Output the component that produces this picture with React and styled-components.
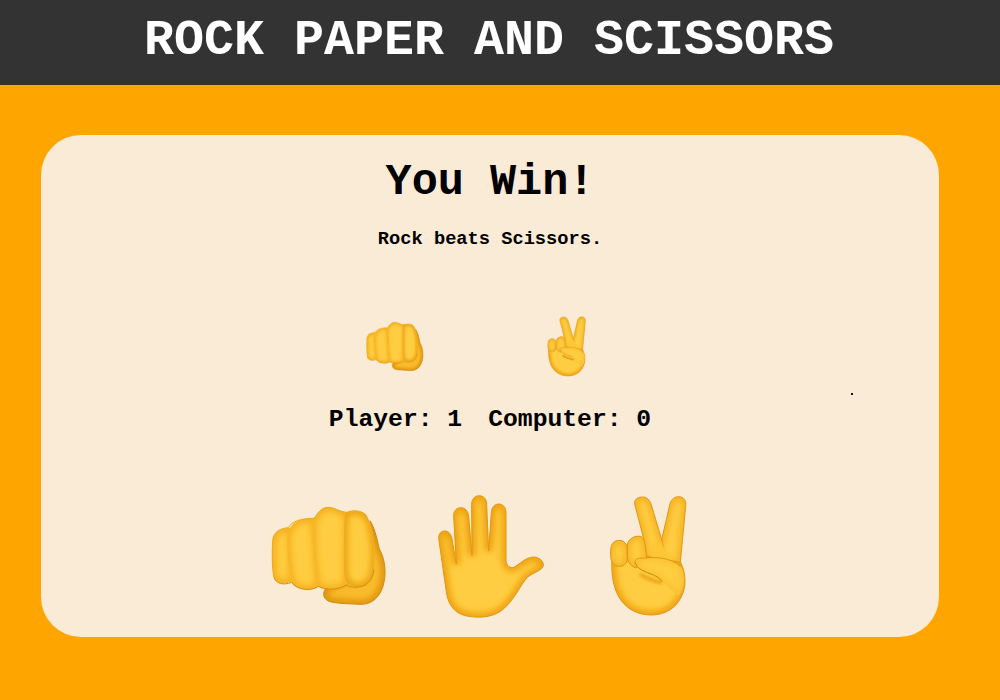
import React from "react";
import styled, { createGlobalStyle } from "styled-components";

const GlobalStyle = createGlobalStyle`
  html, body {
    margin: 0;
    padding: 0;
    background: #ffa500;
    font-family: "Liberation Mono", "Courier New", monospace;
  }
`;

const Header = styled.header`
  height: 85px;
  box-sizing: border-box;
  background: #333333;
  padding: 0 22px 4px 0;
  display: flex;
  align-items: center;
  justify-content: center;
`;

const Title = styled.h1`
  margin: 0;
  color: #ffffff;
  font-size: 50px;
  line-height: 1;
  font-weight: 700;
  white-space: nowrap;
`;

const Main = styled.main`
  padding: 50px 61px 63px 41px;
`;

const Card = styled.section`
  position: relative;
  height: 502px;
  box-sizing: border-box;
  padding-top: 24px;
  background: #faebd7;
  border-radius: 40px;
  display: flex;
  flex-direction: column;
  align-items: center;
  color: #000000;
`;

const Result = styled.h2`
  margin: 0;
  font-size: 43.5px;
  line-height: 48px;
  font-weight: 700;
`;

const Message = styled.p`
  margin: 21px 0 0;
  font-size: 18.7px;
  line-height: 22px;
  font-weight: 700;
`;

const Picks = styled.div`
  margin-top: 64px;
  padding-right: 18px;
  display: flex;
  gap: 107px;
`;

const Score = styled.div`
  margin-top: 25px;
  display: flex;
  gap: 26px;
  font-size: 24.7px;
  line-height: 30px;
  font-weight: 700;
`;

const Choices = styled.div`
  margin-top: 57px;
  display: flex;
  gap: 30px;
`;

const ChoiceButton = styled.button`
  padding: 0;
  border: 0;
  background: none;
  cursor: pointer;
  display: block;
`;

const Speck = styled.span`
  position: absolute;
  left: 810px;
  top: 258px;
  width: 2px;
  height: 2px;
  background: #111111;
`;

const Glyph = styled.svg`
  display: block;
  width: ${(p) => p.$size}px;
  height: ${(p) => p.$size}px;
`;

const Defs = () => (
  <svg width="0" height="0" style={{ position: "absolute" }}>
    <defs>
      <filter id="soft" x="-30%" y="-30%" width="160%" height="160%">
        <feGaussianBlur stdDeviation="10" />
      </filter>
      <filter id="softer" x="-30%" y="-30%" width="160%" height="160%">
        <feGaussianBlur stdDeviation="4" />
      </filter>
    </defs>
  </svg>
);

// one puffy emoji part: flat fill, blurred darker rim kept inside by a clip
const Puffy = ({ id, d, fill = "#ffcd42", rim = "#f0a414", width = 22, line = "#e0980f" }) => (
  <>
    <clipPath id={id}>
      <path d={d} />
    </clipPath>
    <path d={d} fill={fill} />
    <g clipPath={`url(#${id})`}>
      <path d={d} fill="none" stroke={rim} strokeWidth={width} filter="url(#soft)" />
    </g>
    {line && <path d={d} fill="none" stroke={line} strokeWidth="3" strokeLinejoin="round" />}
  </>
);

// paths are in the 3x crop's pixels, so each viewBox is the crop offset
const Fist = ({ size }) => {
  const key = `fist-${size}`;
  return (
    <Glyph $size={size} viewBox="45 36 390 390">
      <Puffy
        id={`${key}-thumb`}
        d="M360 125C376 150 382 185 388 210C402 235 410 270 402 310C394 350 368 378 330 376C295 374 255 374 235 366C220 358 216 342 228 328C260 318 300 300 340 250Z"
        fill="#f9bb2c"
        rim="#dc8f08"
        line="#d58a08"
      />
      <Puffy
        id={`${key}-a`}
        d="M68 185C70 155 95 148 122 146L128 305C100 320 78 314 72 295C66 270 66 220 68 185Z"
        rim="#f4ae1e"
        line=""
      />
      <Puffy
        id={`${key}-b`}
        d="M112 170C118 130 150 118 192 118L206 322C190 336 140 336 125 310C115 270 110 215 112 170Z"
        rim="#f4ae1e"
        line=""
      />
      <Puffy
        id={`${key}-c`}
        d="M190 122C205 100 215 85 235 85C255 85 270 100 292 100L290 318C262 334 225 334 203 322C192 270 186 190 190 122Z"
        rim="#f4ae1e"
        line=""
      />
      <Puffy
        id={`${key}-d`}
        d="M284 102C305 93 335 92 350 110C372 145 378 220 372 272C368 305 350 322 325 324C300 325 285 312 283 290C279 230 281 160 284 102Z"
        rim="#ea9e0e"
        line=""
      />
      <path
        d="M72 295C78 314 100 320 125 310C140 336 190 336 205 322C225 334 262 334 290 318C300 326 312 325 325 324C350 322 368 305 372 272"
        fill="none"
        stroke="#d68d09"
        strokeWidth="3"
      />
      <path
        d="M72 295C66 270 66 220 68 185C70 155 95 148 115 146C125 128 150 118 192 118C205 100 215 85 235 85C255 85 270 100 290 100C305 93 335 92 350 110"
        fill="none"
        stroke="#eaa81c"
        strokeWidth="3"
      />
    </Glyph>
  );
};

const Palm = ({ size }) => (
  <Glyph $size={size} viewBox="15 36 390 390">
    <Puffy
      id={`palm-${size}`}
      d="M56 178C56 160 66 156 75 156C88 156 93 168 96 180L109 255L101 112C100 96 110 86 122 86C136 86 144 96 146 112L156 230L155 76C155 60 165 50 178 50C190 50 200 60 200 76L206 216L214 100C215 84 225 75 236 75C250 75 258 86 258 102L258 245C260 262 270 268 282 265C300 255 315 236 340 234C358 234 372 248 370 260C366 275 340 280 322 295C300 320 285 360 250 390C225 412 190 416 165 414C120 412 90 395 80 345Z"
      rim="#ee9f10"
      width={24}
    />
  </Glyph>
);

const Peace = ({ size }) => {
  const key = `peace-${size}`;
  return (
    <Glyph $size={size} viewBox="-15 36 390 390">
      <Puffy
        id={`${key}-two`}
        d="M240 75C244 60 254 53 266 53C280 53 290 65 287 82L270 260L180 240L213 190Z"
        width={14}
      />
      <Puffy
        id={`${key}-one`}
        d="M134 75C132 58 148 54 158 54C172 54 180 65 184 78L222 205L170 260L160 175Z"
        width={14}
      />
      <path d="M190 190L213 190L262 260L170 260Z" fill="#fcc636" filter="url(#softer)" />
      <Puffy
        id={`${key}-palm`}
        d="M66 240C62 300 75 360 120 390C160 416 225 416 260 375C285 345 295 300 272 250L100 220Z"
        rim="#ee9f10"
        width={24}
      />
      <Puffy
        id={`${key}-curl-a`}
        d="M62 215C62 192 75 184 88 184C102 184 112 195 112 215L112 240C110 255 100 262 88 262C72 262 62 250 62 230Z"
        width={12}
        line="#dc950e"
      />
      <Puffy
        id={`${key}-curl-b`}
        d="M112 198C115 178 135 170 150 172C162 172 166 190 170 240L140 266C125 266 114 250 112 235Z"
        width={12}
        line="#dc950e"
      />
      <Puffy
        id={`${key}-thumb`}
        d="M136 252C132 240 145 236 160 238C200 232 240 236 272 262C288 290 285 330 265 350C245 335 232 320 216 306C212 296 195 290 180 284C160 276 142 270 136 252Z"
        rim="#f5b024"
        width={8}
        line=""
      />
      <path d="M136 252C132 240 145 236 160 238C200 232 240 236 272 262" fill="none" stroke="#e09a12" strokeWidth="3" />
      <path d="M136 252C142 270 160 276 180 284C195 290 210 295 216 308" fill="none" stroke="#cc860a" strokeWidth="3" strokeLinecap="round" />
      <path d="M150 285C170 300 195 305 216 312" fill="none" stroke="#e8a012" strokeWidth="10" filter="url(#softer)" />
    </Glyph>
  );
};

export default function App() {
  return (
    <>
      <GlobalStyle />
      <Defs />
      <Header>
        <Title>ROCK PAPER AND SCISSORS</Title>
      </Header>
      <Main>
        <Card>
          <Result>You Win!</Result>
          <Message>Rock beats Scissors.</Message>
          <Picks>
            <Fist size={65} />
            <Peace size={65} />
          </Picks>
          <Score>
            <span>Player: 1</span>
            <span>Computer: 0</span>
          </Score>
          <Choices>
            <ChoiceButton aria-label="Rock">
              <Fist size={130} />
            </ChoiceButton>
            <ChoiceButton aria-label="Paper">
              <Palm size={130} />
            </ChoiceButton>
            <ChoiceButton aria-label="Scissors">
              <Peace size={130} />
            </ChoiceButton>
          </Choices>
          <Speck />
        </Card>
      </Main>
    </>
  );
}
